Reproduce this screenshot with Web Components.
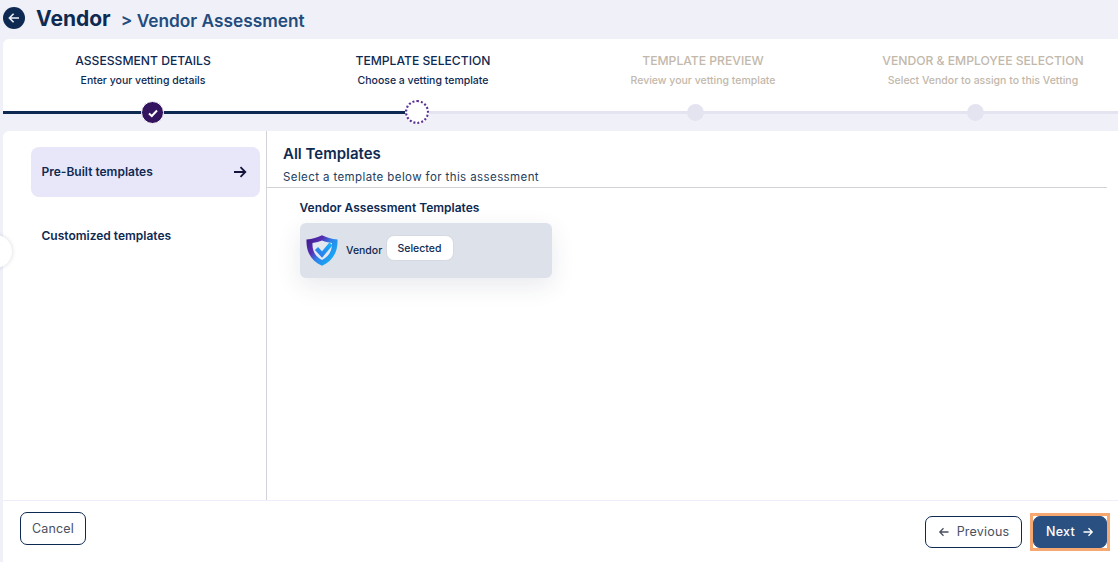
<!DOCTYPE html>
<html>
<head>
<meta charset="utf-8">
<style>
  html, body { margin: 0; height: 100%; }
  body { background: #f0f1f8; font-family: Inter, "Liberation Sans", sans-serif; color: #0f2a52; overflow: hidden; }
</style>
</head>
<body>
<vendor-page></vendor-page>
<script>
const ARROW_L = `<svg viewBox="0 0 12 12" width="12" height="12" fill="none" stroke="currentColor" stroke-width="1.3"><path d="M10.5 6H1.8M5.5 2.2 1.8 6l3.7 3.8"/></svg>`;
const ARROW_R = `<svg viewBox="0 0 12 12" width="12" height="12" fill="none" stroke="currentColor" stroke-width="1.3"><path d="M1.5 6h8.7M6.5 2.2 10.2 6l-3.7 3.8"/></svg>`;

class PageTitle extends HTMLElement {
  constructor() {
    super();
    this.attachShadow({ mode: 'open' }).innerHTML = `
<style>
  :host { display: flex; align-items: center; height: 39px; padding-left: 3px; box-sizing: border-box; }
  .back { width: 22px; height: 22px; border-radius: 50%; background: #0f2a52; color: #f0f1f8; display: flex; align-items: center; justify-content: center; margin-right: 11px; margin-top: -3px; }
  h1 { margin: -2px 10px 0 0; font-size: 21px; font-weight: 700; color: #0f2a52; line-height: 26px; }
  h2 { margin: 2px 0 0; font-size: 17.3px; font-weight: 600; color: #234c7e; line-height: 22px; }
</style>
<span class="back"><svg viewBox="0 0 14 14" width="14" height="14" fill="none" stroke="currentColor" stroke-width="1.6"><path d="M12 7H2.5M6.6 2.8 2.4 7l4.2 4.2"/></svg></span>
<h1>Vendor</h1><h2>&gt; Vendor Assessment</h2>`;
  }
}

class StepItem extends HTMLElement {
  constructor() {
    super();
    this.attachShadow({ mode: 'open' }).innerHTML = `
<style>
  :host { display: block; text-align: center; color: #0f2a52; }
  :host([muted]) { color: #c2b8ab; }
  .t { font-size: 12.15px; font-weight: 500; line-height: 16px; height: 16px; margin-top: 14px; white-space: nowrap; }
  .s { font-size: 10.5px; font-weight: 500; line-height: 14px; margin-top: 5px; white-space: nowrap; }
</style>
<div class="t"></div><div class="s"><slot></slot></div>`;
    this.shadowRoot.querySelector('.t').textContent = this.getAttribute('title');
  }
}

class StepRail extends HTMLElement {
  constructor() {
    super();
    this.attachShadow({ mode: 'open' }).innerHTML = `
<style>
  :host { display: block; position: relative; height: 3px; background: #e4e4f0; }
  .done { position: absolute; left: 0; top: 0; height: 3px; width: 403px; background: #0f2a52; }
  .n { position: absolute; border-radius: 50%; box-sizing: border-box; }
  .check { left: 138px; top: -10px; width: 23px; height: 23px; background: #35145f; border: 1px solid #fff; display: flex; align-items: center; justify-content: center; }
  .cur { left: 402px; top: -11px; width: 24px; height: 24px; background: #fff; border: 2px dotted #5b2f94; }
  .todo { top: -7px; width: 17px; height: 17px; background: #e4e4f0; }
</style>
<div class="done"></div>
<div class="n check"><svg viewBox="0 0 12 12" width="12" height="12" fill="none" stroke="#fff" stroke-width="2"><path d="M2 6.5 4.8 9 10 3.5"/></svg></div>
<div class="n cur"></div>
<div class="n todo" style="left:684px"></div>
<div class="n todo" style="left:964px"></div>`;
  }
}

class StepBar extends HTMLElement {
  constructor() {
    super();
    this.attachShadow({ mode: 'open' }).innerHTML = `
<style>
  :host { display: block; background: #fff; margin-left: 3px; border-radius: 6px 0 0 0; height: 75px; }
  .steps { display: grid; grid-template-columns: repeat(4, 280px); height: 72px; }
</style>
<div class="steps"><slot></slot></div>
<step-rail></step-rail>`;
  }
}

class SideItem extends HTMLElement {
  constructor() {
    super();
    this.attachShadow({ mode: 'open' }).innerHTML = `
<style>
  :host { display: flex; align-items: center; justify-content: space-between; width: 229px; height: 50px; box-sizing: border-box; padding: 0 13px 1px 10.5px; border-radius: 8px; font-size: 12px; font-weight: 600; color: #0f2a52; }
  :host([active]) { background: #e8e7f9; }
  svg { display: none; }
  :host([active]) svg { display: block; }
</style>
<slot></slot>
<svg viewBox="0 0 14 14" width="14" height="14" fill="none" stroke="#14143c" stroke-width="1.8"><path d="M1 7h11.5M7.5 2.2 12.3 7l-4.8 4.8"/></svg>`;
  }
}

class TemplateCard extends HTMLElement {
  constructor() {
    super();
    this.attachShadow({ mode: 'open' }).innerHTML = `
<style>
  :host { display: flex; align-items: center; position: relative; width: 252px; height: 55px; box-sizing: border-box; padding-left: 6px; background: #dce1ea; border-radius: 6px; box-shadow: 0 8px 24px rgba(40, 50, 90, .1); }
  svg { flex: none; margin-top: -1px; }
  .name { font-size: 10.5px; font-weight: 500; color: #0f2a52; width: 39px; margin-left: 8px; overflow: hidden; white-space: nowrap; }
  .pick { position: absolute; left: 86px; top: 12px; width: 68px; height: 26px; box-sizing: border-box; background: #fff; border: 1px solid #d5d9e2; border-radius: 8px; font-size: 10.5px; font-weight: 500; color: #0f2a52; display: flex; align-items: center; justify-content: center; padding-right: 1px; }
</style>
<svg width="32" height="31" viewBox="0 0 32 31" fill="none">
  <defs>
    <linearGradient id="sh" x1="0" y1="0" x2="1" y2=".75"><stop offset="0" stop-color="#3c1585"/><stop offset=".38" stop-color="#5630b4"/><stop offset=".6" stop-color="#2c86ea"/><stop offset="1" stop-color="#10b4f8"/></linearGradient>
    <linearGradient id="tk" x1="0" y1="1" x2="1" y2="0"><stop offset="0" stop-color="#2b78ea"/><stop offset="1" stop-color="#18b2f8"/></linearGradient>
  </defs>
  <path d="M.5 4.500C6.500 4 11.500 2.500 16 .3 20.500 2.500 25.500 4 31.500 4.500 32 16 27.500 25.500 16 30.800 4.500 25.500 0 16 .5 4.500Z" fill="url(#sh)"/>
  <path d="M6.500 8C10 7.500 13.500 6.700 16 5.500 18.500 6.700 22 7.500 26 8 26.300 15.500 23 21.500 16 25 9 21.500 6 15.500 6.500 8Z" fill="#e4e8f0"/>
  <path d="M10.500 13.500 16 19.500 25 8.800" stroke="url(#tk)" stroke-width="4.200" fill="none"/>
</svg>
<span class="name">Vendor Assessment</span>
<span class="pick">Selected</span>`;
  }
}

class AppButton extends HTMLElement {
  constructor() {
    super();
    this.attachShadow({ mode: 'open' }).innerHTML = `
<style>
  :host { display: inline-flex; align-items: center; justify-content: center; gap: 7px; box-sizing: border-box; height: 32px; padding-bottom: 1px; border: 1px solid #0f2a52; border-radius: 7px; background: #fff; color: #4a5160; font-size: 12.5px; font-weight: 400; letter-spacing: .2px; position: relative; }
  :host([primary]) { background: #2a5082; border-color: #2a5082; color: #fff; font-weight: 500; }
  :host([primary])::after { content: ""; position: absolute; inset: -4px; border: 3px solid #f7a870; }
</style>
<slot></slot>`;
  }
}

class VendorPage extends HTMLElement {
  constructor() {
    super();
    this.attachShadow({ mode: 'open' }).innerHTML = `
<style>
  :host { display: flex; flex-direction: column; width: 1118px; height: 562px; }
  .panel { margin: 17px 0 0 3px; flex: 1; background: #fff; border-radius: 6px 0 0 0; display: flex; flex-direction: column; position: relative; min-height: 0; }
  .body { flex: 1; display: flex; min-height: 0; }
  .side { width: 264px; box-sizing: border-box; padding: 16px 0 0 28px; border-right: 1px solid #d2d3d8; display: flex; flex-direction: column; gap: 14px; }
  .main { flex: 1; padding-top: 13px; min-width: 0; }
  .head { margin: 0 11px 0 0; padding: 0 0 3px 16px; border-bottom: 1px solid #d2d3d8; }
  .head b { display: block; font-size: 15px; font-weight: 600; line-height: 20px; color: #0f2a52; }
  .head span { display: block; font-size: 11.5px; line-height: 14px; margin-top: 6px; letter-spacing: .4px; color: #234060; }
  .group { padding: 12px 0 0 33px; }
  .group h3 { margin: 0 0 8px -.5px; font-size: 12px; font-weight: 600; line-height: 15px; color: #0f2a52; }
  .foot { height: 62px; flex: none; box-sizing: border-box; border-top: 1px solid #eeedfb; display: flex; align-items: center; padding: 0 11px 0 17px; }
  .right { margin-left: auto; display: flex; gap: 11px; margin-top: 1px; }
  .handle { position: absolute; left: -24px; top: 104px; width: 33px; height: 33px; border-radius: 50%; background: #fff; box-shadow: 0 0 4px rgba(30, 40, 70, .18); }
</style>
<page-title></page-title>
<step-bar>
  <step-item title="ASSESSMENT DETAILS">Enter your vetting details</step-item>
  <step-item title="TEMPLATE SELECTION">Choose a vetting template</step-item>
  <step-item title="TEMPLATE PREVIEW" muted>Review your vetting template</step-item>
  <step-item title="VENDOR &amp; EMPLOYEE SELECTION" muted>Select Vendor to assign to this Vetting</step-item>
</step-bar>
<div class="panel">
  <div class="handle"></div>
  <div class="body">
    <div class="side">
      <side-item active>Pre-Built templates</side-item>
      <side-item>Customized templates</side-item>
    </div>
    <div class="main">
      <div class="head"><b>All Templates</b><span>Select a template below for this assessment</span></div>
      <div class="group">
        <h3>Vendor Assessment Templates</h3>
        <template-card></template-card>
      </div>
    </div>
  </div>
  <div class="foot">
    <app-button style="width:66px;height:33px;margin-top:-6px">Cancel</app-button>
    <div class="right">
      <app-button style="width:97px">${ARROW_L}Previous</app-button>
      <app-button primary style="width:74px">Next${ARROW_R}</app-button>
    </div>
  </div>
</div>`;
  }
}

customElements.define('page-title', PageTitle);
customElements.define('step-item', StepItem);
customElements.define('step-rail', StepRail);
customElements.define('step-bar', StepBar);
customElements.define('side-item', SideItem);
customElements.define('template-card', TemplateCard);
customElements.define('app-button', AppButton);
customElements.define('vendor-page', VendorPage);
</script>
</body>
</html>
